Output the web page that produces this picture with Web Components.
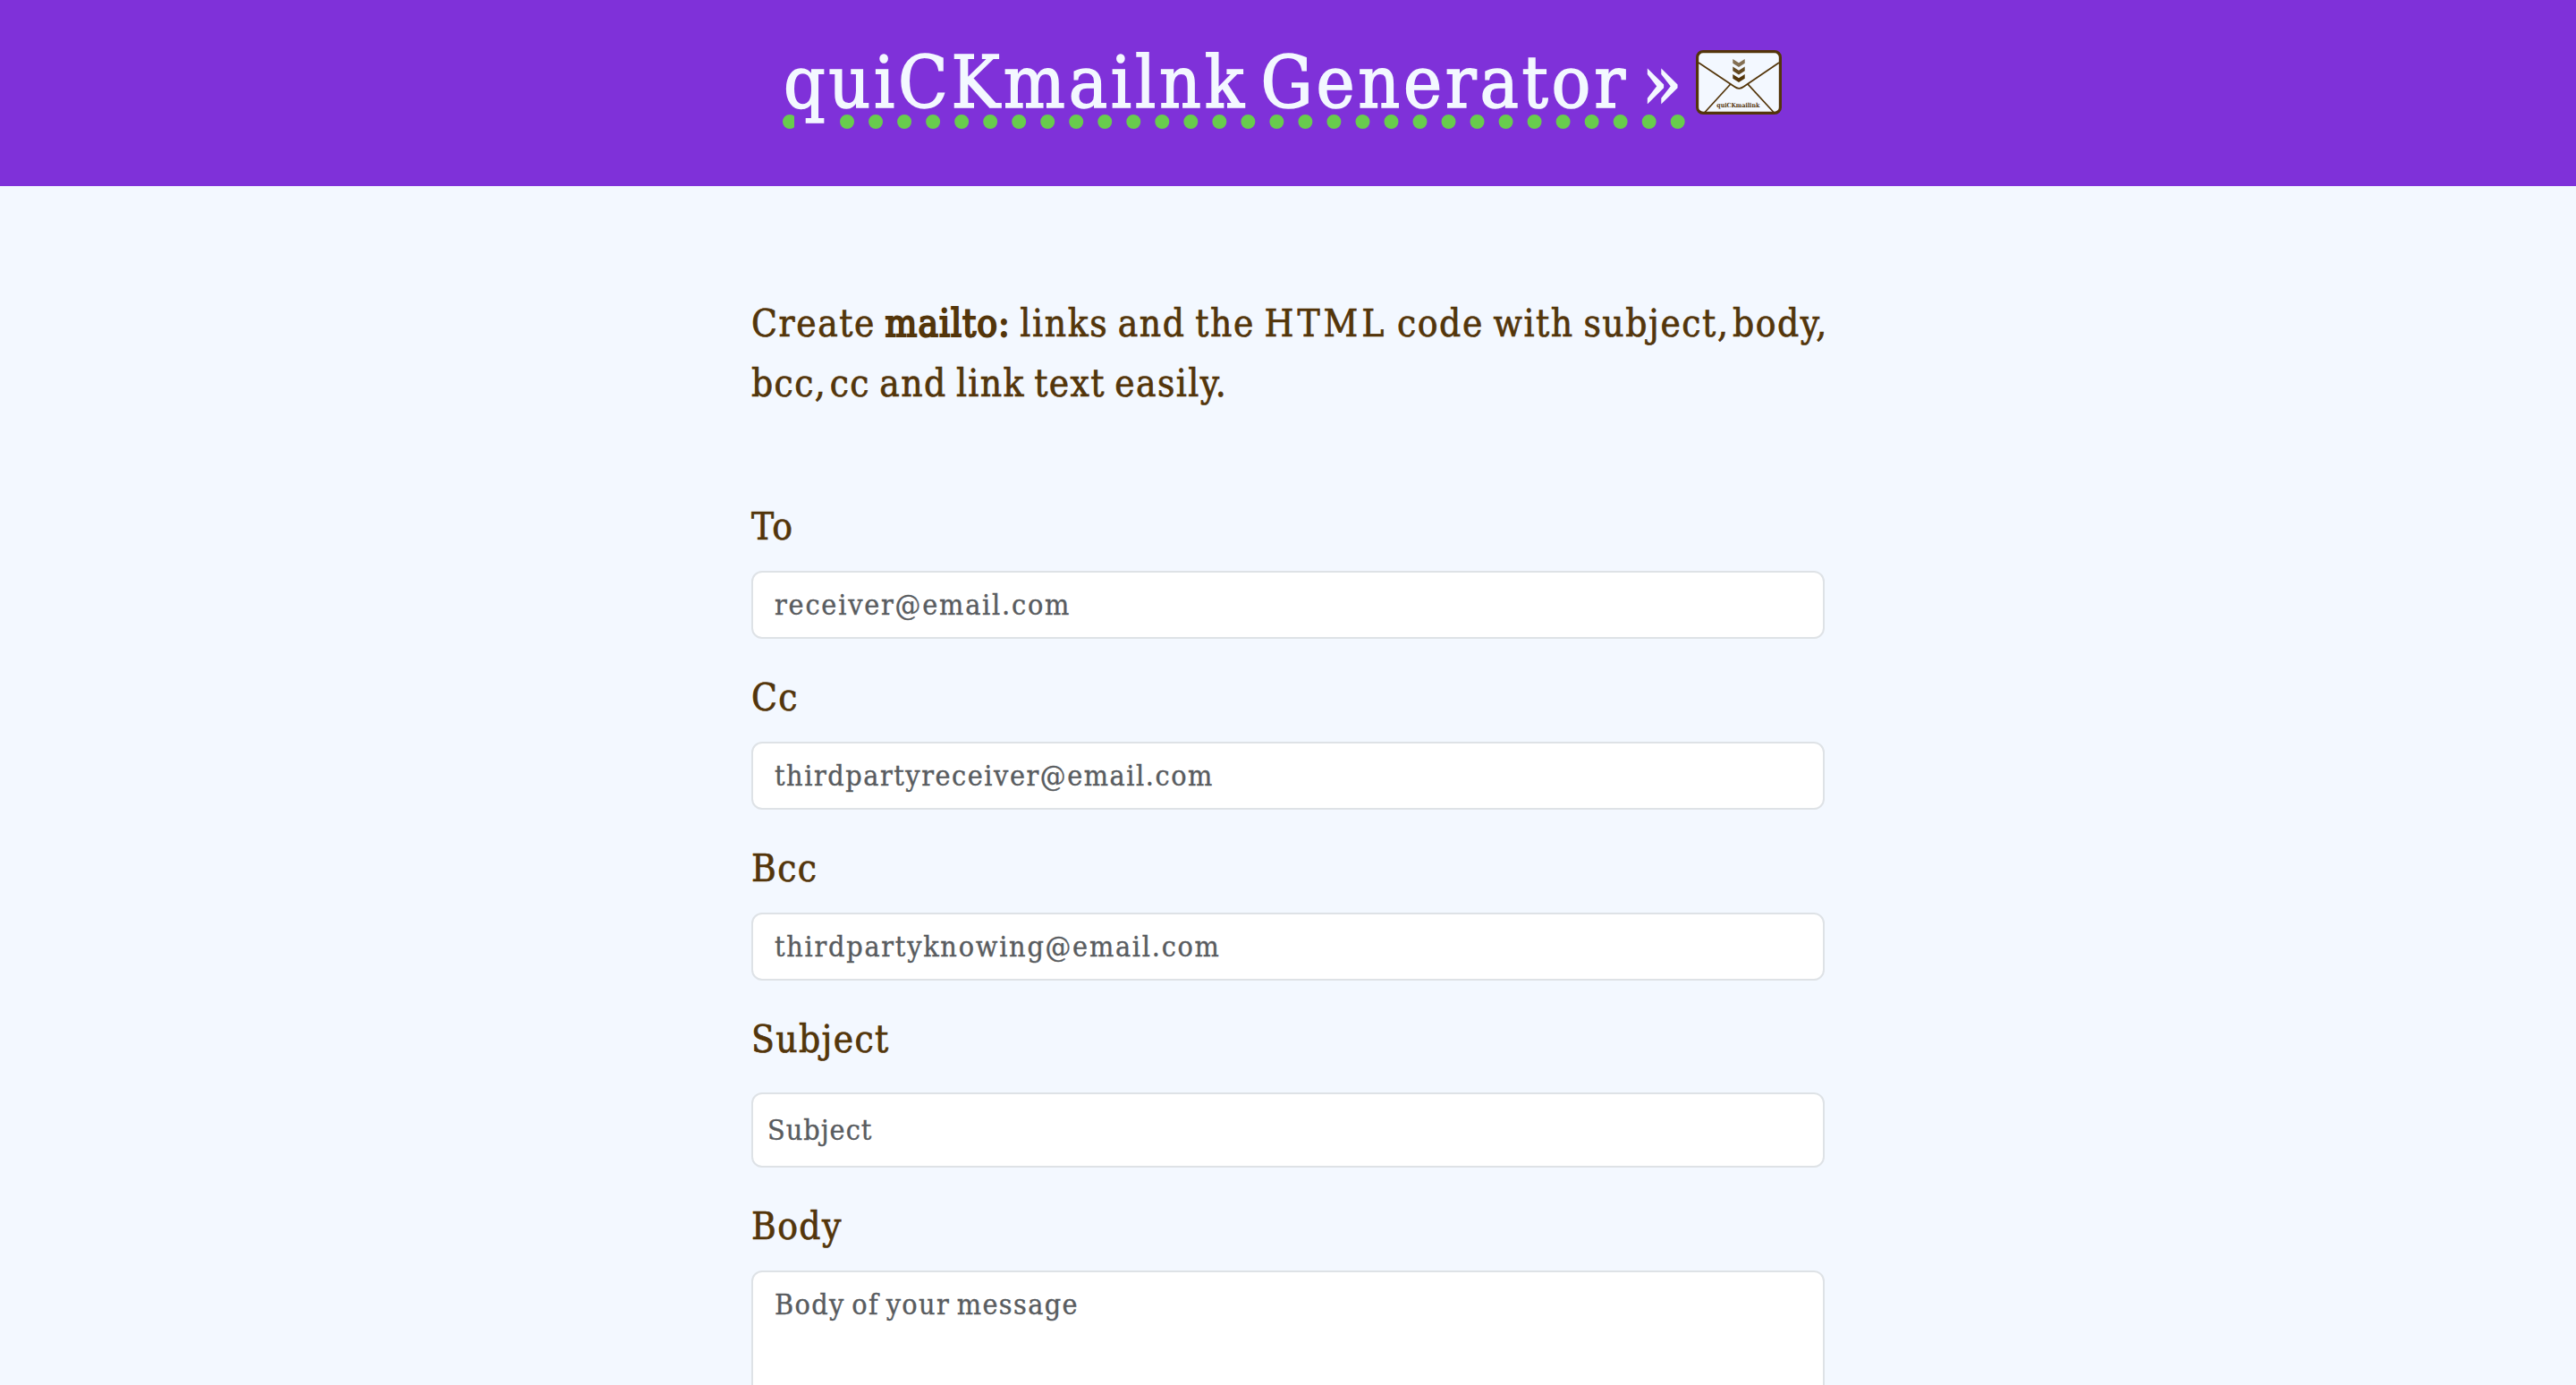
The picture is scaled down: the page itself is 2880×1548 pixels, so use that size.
<!DOCTYPE html>
<html lang="en">
<head>
<meta charset="utf-8">
<title>quiCKmailnk Generator</title>
<style>
html {
  background: #f3f8ff;
}

body {
  margin: 0;
  height: 1548px;
  overflow: hidden;
  font-family: "DejaVu Serif Condensed", "DejaVu Serif", serif;
  font-size: 42px;
  color: #53350a;
  -webkit-text-stroke: 0.7px currentColor;
}

mail-form b {
  font-weight: 400;
  letter-spacing: 1px;
  -webkit-text-stroke: 2px currentColor;
}

mail-form i {
  font-style: normal;
  letter-spacing: 0;
  word-spacing: -7px;
}

.wide {
  letter-spacing: 4px;
}

.second {
  letter-spacing: 1.4px;
}
</style>
</head>
<body>

<page-header>quiCKmailnk Generator »</page-header>

<mail-form>
  <span slot="intro">Create <b>mailto:</b> links and the <span class="wide">HTML</span> code with subject<i>, </i>body,<br><span class="second">bcc<i>, </i>cc and link text easily.</span></span>
  <form-field label="To" placeholder="receiver@email.com" style="--tracking: 1.8px"></form-field>
  <form-field label="Cc" placeholder="thirdpartyreceiver@email.com" style="--tracking: 1.55px"></form-field>
  <form-field label="Bcc" placeholder="thirdpartyknowing@email.com" style="--tracking: 1.75px"></form-field>
  <form-field class="subject" label="Subject" placeholder="Subject" style="--tracking: 1px"></form-field>
  <form-field label="Body" placeholder="Body of your message" multiline style="--tracking: 1.4px; --word-gap: -3px"></form-field>
</mail-form>

<script>
const logoTemplate = document.createElement('template')
logoTemplate.innerHTML = `
  <style>
:host {
  display: block;
  width: 96px;
  height: 72px;
  -webkit-text-stroke: 0;
}

svg {
  display: block;
}
  </style>
  <svg width="96" height="72" viewBox="0 0 96 72">
    <rect x="1.6" y="1.6" width="92.8" height="68.8" rx="6.5" fill="#f3f8ff" stroke="#53350a" stroke-width="3.2"/>
    <g fill="none" stroke="#53350a" stroke-width="1.7">
      <path d="M3 14 L43 40.8 Q48.3 44.8 53.6 40.8 L93 14"/>
      <path d="M39 37.7 L10 69.5"/>
      <path d="M57.7 37.7 L87 69.5"/>
    </g>
    <g fill="#53350a">
      <path opacity=".7" d="M41.3 10 L48 14.2 L54.7 10 V14.8 L48 19 L41.3 14.8Z"/>
      <path opacity=".9" d="M41.3 18.5 L48 22.7 L54.7 18.5 V23.3 L48 27.5 L41.3 23.3Z"/>
      <path d="M41.3 27 L48 31.2 L54.7 27 V31.8 L48 36 L41.3 31.8Z"/>
    </g>
    <text x="23.3" y="64.3" textLength="48" lengthAdjust="spacingAndGlyphs" text-rendering="geometricPrecision" font-family="DejaVu Serif, serif" font-size="7" font-weight="bold" fill="#53350a">quiCKmailink</text>
  </svg>
`

customElements.define('envelope-logo',
  /**
   * Envelope with the product name on it.
   */
  class extends HTMLElement {
    constructor() {
      super()
      this.attachShadow({ mode: 'open' })
      this.shadowRoot.appendChild(logoTemplate.content.cloneNode(true))
    }
  }
)

const headerTemplate = document.createElement('template')
headerTemplate.innerHTML = `
  <style>
:host {
  display: block;
  background: #7f31d9;
  color: #f3f8ff;
}

header {
  display: flex;
  justify-content: center;
  align-items: center;
  box-sizing: border-box;
  height: 208px;
  padding: 32px 0 56px;
}

h1 {
  margin: 0;
  font-size: 81px;
  font-weight: 400;
  line-height: 120px;
  letter-spacing: 3.75px;
  word-spacing: -12px;
  white-space: nowrap;
  text-decoration: underline dotted #68cc4d 16px;
  text-underline-offset: 8px;
  -webkit-text-stroke: 1.5px currentColor;
}

envelope-logo {
  margin: 0 12px;
}
  </style>
  <header>
    <h1><slot></slot></h1>
    <envelope-logo></envelope-logo>
  </header>
`

customElements.define('page-header',
  /**
   * Purple banner with title and logo.
   */
  class extends HTMLElement {
    constructor() {
      super()
      this.attachShadow({ mode: 'open' })
      this.shadowRoot.appendChild(headerTemplate.content.cloneNode(true))
    }
  }
)

const fieldTemplate = document.createElement('template')
fieldTemplate.innerHTML = `
  <style>
:host {
  display: flex;
  flex-direction: column;
  gap: 16px;
}

:host(.subject) {
  gap: 26px;
}

label {
  line-height: 66px;
  letter-spacing: 1.4px;
}

input,
textarea {
  display: block;
  box-sizing: border-box;
  width: 100%;
  height: 76px;
  margin: 0;
  padding: 12px 24px;
  font: inherit;
  font-size: 32px;
  line-height: 48px;
  letter-spacing: var(--tracking);
  word-spacing: var(--word-gap, 0);
  color: #212529;
  background: #fff;
  border: 2px solid #dee2e6;
  border-radius: 12px;
  outline: none;
  -webkit-text-stroke: 0.4px currentColor;
}

:host(.subject) input {
  height: 84px;
  padding: 16px;
}

textarea {
  height: 272px;
  resize: none;
}

::placeholder {
  color: #595c5f;
  opacity: 1;
}
  </style>
  <label for="control"></label>
`

customElements.define('form-field',
  /**
   * Label with a text input, or a textarea when "multiline" is set.
   */
  class extends HTMLElement {
    constructor() {
      super()
      this.attachShadow({ mode: 'open' })
      this.shadowRoot.appendChild(fieldTemplate.content.cloneNode(true))
    }

    /**
     * Called when component is added to DOM
     */
    connectedCallback() {
      const control = document.createElement(this.hasAttribute('multiline') ? 'textarea' : 'input')
      control.id = 'control'
      control.placeholder = this.getAttribute('placeholder')
      this.shadowRoot.querySelector('label').textContent = this.getAttribute('label')
      this.shadowRoot.appendChild(control)
    }
  }
)

const formTemplate = document.createElement('template')
formTemplate.innerHTML = `
  <style>
:host {
  display: block;
  width: 1200px;
  margin: 0 auto;
  padding-top: 120px;
}

p {
  margin: 0 0 94px;
  line-height: 67px;
  letter-spacing: 1.6px;
  word-spacing: -3px;
  white-space: nowrap;
}

form {
  display: flex;
  flex-direction: column;
  gap: 33px;
}
  </style>
  <p><slot name="intro"></slot></p>
  <form>
    <slot></slot>
  </form>
`

customElements.define('mail-form',
  /**
   * Intro text and the column of fields.
   */
  class extends HTMLElement {
    constructor() {
      super()
      this.attachShadow({ mode: 'open' })
      this.shadowRoot.appendChild(formTemplate.content.cloneNode(true))
    }
  }
)
</script>
</body>
</html>
